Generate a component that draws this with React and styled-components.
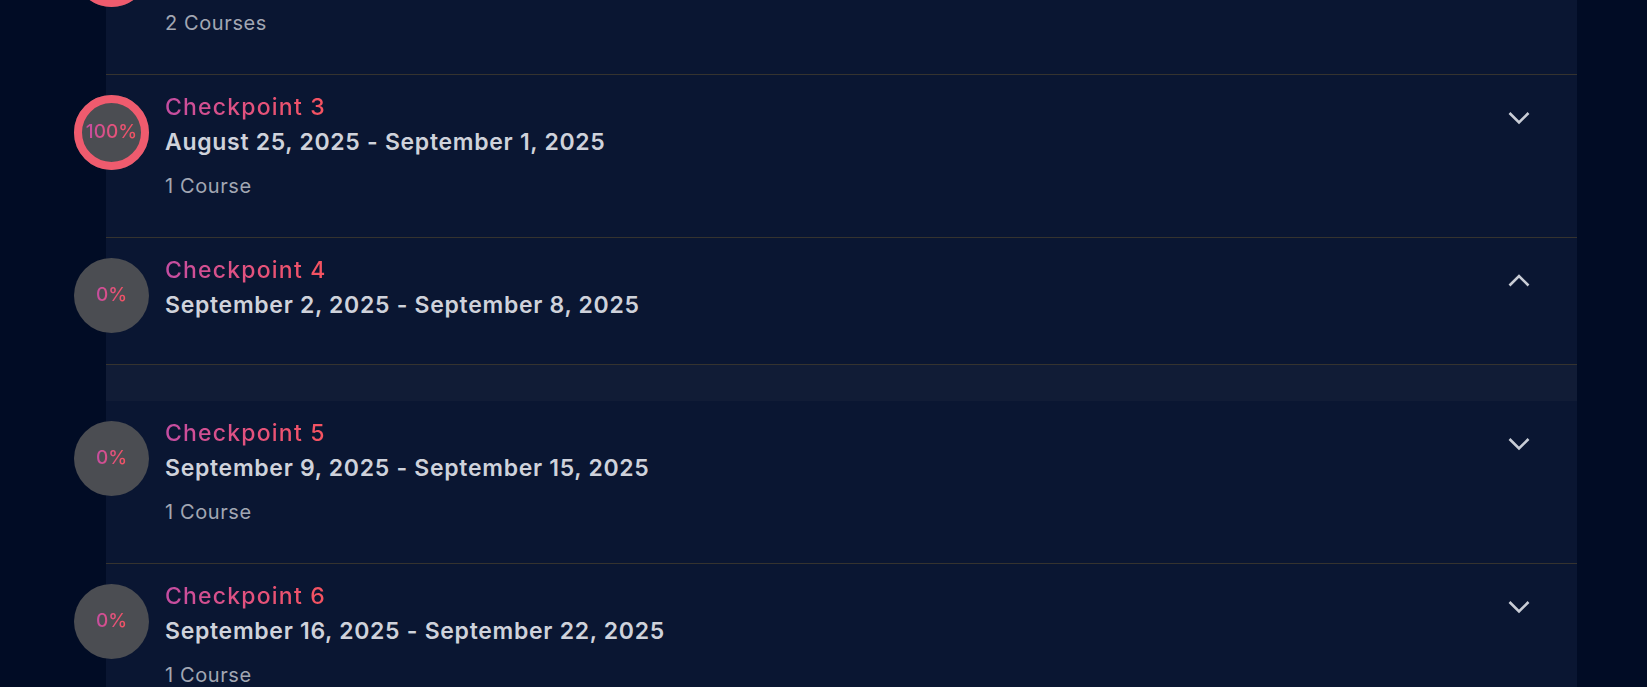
import React from "react";
import styled, { createGlobalStyle } from "styled-components";

const Global = createGlobalStyle`
  html, body { margin: 0; padding: 0; }
  body {
    background: #010c25;
    overflow: hidden;
    font-family: Inter, "Noto Sans", "Liberation Sans", sans-serif;
  }
`;

const Page = styled.div`
  height: 100vh;
  overflow: hidden;
  padding: 0 70px 0 106px;
  box-sizing: border-box;
`;

const Panel = styled.div`
  background: #0a1632;
  min-height: 100%;
`;

const List = styled.div`
  margin-top: -88px;
`;

const Header = styled.div`
  display: flex;
  align-items: flex-start;
  padding: 16px 47px ${(p) => (p.$open ? "31px" : "37px")} 0;
  border-bottom: 1px solid #35332f;
`;

const Marker = styled.div`
  flex: none;
  position: relative;
  width: 75px;
  height: 75px;
  margin: 4px 0 0 -32px;
  display: flex;
  align-items: center;
  justify-content: center;
  svg {
    position: absolute;
    inset: 0;
  }
`;

const gradientText = `
  background: linear-gradient(90deg, #c44da2 0%, #e2527f 50%, #f6535f 100%);
  -webkit-background-clip: text;
  background-clip: text;
  color: transparent;
`;

const Percent = styled.span`
  position: relative;
  font-size: 19px;
  font-weight: 500;
  margin-top: -3px;
  ${gradientText}
`;

const Info = styled.div`
  flex: 1;
  margin-left: 16px;
  display: flex;
  flex-direction: column;
  align-items: flex-start;
`;

const Title = styled.span`
  font-size: 23px;
  font-weight: 500;
  line-height: 32px;
  letter-spacing: 1.2px;
  ${gradientText}
`;

const Range = styled.span`
  font-size: 23px;
  font-weight: 600;
  line-height: 38px;
  letter-spacing: 0.7px;
  color: #cfd2db;
`;

const Count = styled.span`
  margin-top: 12px;
  font-size: 20px;
  font-weight: 400;
  line-height: 27px;
  letter-spacing: 0.6px;
  color: #a2a7b3;
`;

const Toggle = styled.button`
  flex: none;
  width: 22px;
  height: 14px;
  margin-top: 20px;
  padding: 0;
  border: 0;
  background: none;
  display: block;
  cursor: pointer;
  svg { display: block; }
`;

const Body = styled.div`
  height: 36px;
  background: #111c36;
`;

const rows = [
  { n: 2, range: "August 18, 2025 - August 24, 2025", count: "2 Courses", pct: 100 },
  { n: 3, range: "August 25, 2025 - September 1, 2025", count: "1 Course", pct: 100 },
  { n: 4, range: "September 2, 2025 - September 8, 2025", pct: 0, open: true },
  { n: 5, range: "September 9, 2025 - September 15, 2025", count: "1 Course", pct: 0 },
  { n: 6, range: "September 16, 2025 - September 22, 2025", count: "1 Course", pct: 0 },
];

function Ring({ pct }) {
  const r = 33.5;
  const c = 2 * Math.PI * r;
  return (
    <svg width="75" height="75" viewBox="0 0 75 75">
      <circle cx="37.5" cy="37.5" r="37.5" fill="#4b4d52" />
      {pct > 0 && (
        <circle
          cx="37.5"
          cy="37.5"
          r={r}
          fill="none"
          stroke="#ef5b6e"
          strokeWidth="8"
          strokeDasharray={`${(c * pct) / 100} ${c}`}
          transform="rotate(-90 37.5 37.5)"
        />
      )}
    </svg>
  );
}

function Chevron({ up }) {
  return (
    <svg width="22" height="14" viewBox="0 0 22 14">
      <polyline
        points={up ? "1.5,11.5 11,2 20.5,11.5" : "1.5,2 11,11.5 20.5,2"}
        fill="none"
        stroke="#c9cdd6"
        strokeWidth="2.6"
        strokeLinecap="butt"
        strokeLinejoin="miter"
      />
    </svg>
  );
}

export default function App() {
  return (
    <>
      <Global />
      <Page>
        <Panel>
          <List>
            {rows.map((r) => (
              <div key={r.n}>
                <Header $open={r.open}>
                  <Marker>
                    <Ring pct={r.pct} />
                    <Percent>{r.pct}%</Percent>
                  </Marker>
                  <Info>
                    <Title>Checkpoint {r.n}</Title>
                    <Range>{r.range}</Range>
                    {!r.open && <Count>{r.count}</Count>}
                  </Info>
                  <Toggle aria-label="toggle">
                    <Chevron up={r.open} />
                  </Toggle>
                </Header>
                {r.open && <Body />}
              </div>
            ))}
          </List>
        </Panel>
      </Page>
    </>
  );
}
